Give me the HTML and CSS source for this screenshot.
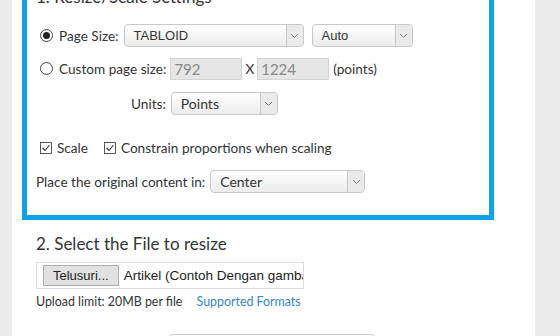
FILE: index.html
```html
<!DOCTYPE html>
<html lang="en">

<head>
    <meta charset="UTF-8">
    <meta name="viewport" content="width=device-width, initial-scale=1.0">
    <title>Resize PDF</title>
    <link rel="stylesheet" href="styles.css">
</head>

<body>
    <div class="page">
        <div class="settings">
            <h3>1. Resize/Scale Settings</h3>

            <div class="row row-size">
                <span class="radio checked"></span>
                <label class="lbl">Page Size:</label>
                <div class="select sel-size arial"><span class="val">TABLOID</span><span class="arrow"><svg width="9" height="6" viewBox="0 0 9 6"><path d="M1 1l3.5 3.5L8 1" fill="none" stroke="#777" stroke-width="1"/></svg></span></div>
                <div class="select sel-orient arial"><span class="val">Auto</span><span class="arrow"><svg width="9" height="6" viewBox="0 0 9 6"><path d="M1 1l3.5 3.5L8 1" fill="none" stroke="#777" stroke-width="1"/></svg></span></div>
            </div>

            <div class="row row-custom">
                <span class="radio"></span>
                <label class="lbl">Custom page size:</label>
                <input class="num" type="text" value="792" disabled>
                <span class="x">X</span>
                <input class="num" type="text" value="1224" disabled>
                <span class="unit">(points)</span>
            </div>

            <div class="row row-units">
                <label class="lbl">Units:</label>
                <div class="select sel-units"><span class="val">Points</span><span class="arrow"><svg width="9" height="6" viewBox="0 0 9 6"><path d="M1 1l3.5 3.5L8 1" fill="none" stroke="#777" stroke-width="1"/></svg></span></div>
            </div>

            <div class="row row-checks">
                <span class="check"><svg width="10" height="10" viewBox="0 0 10 10"><path d="M1.5 5l2.5 2.5L8.5 2" fill="none" stroke="#333" stroke-width="1.1"/></svg></span>
                <label class="lbl">Scale</label>
                <span class="check second"><svg width="10" height="10" viewBox="0 0 10 10"><path d="M1.5 5l2.5 2.5L8.5 2" fill="none" stroke="#333" stroke-width="1.1"/></svg></span>
                <label class="lbl">Constrain proportions when scaling</label>
            </div>

            <div class="row row-place">
                <label class="lbl">Place the original content in:</label>
                <div class="select sel-place"><span class="val">Center</span><span class="arrow"><svg width="9" height="6" viewBox="0 0 9 6"><path d="M1 1l3.5 3.5L8 1" fill="none" stroke="#777" stroke-width="1"/></svg></span></div>
            </div>
        </div>

        <div class="upload">
            <h3>2. Select the File to resize</h3>
            <div class="file">
                <span class="file-btn">Telusuri...</span>
                <span class="file-name">Artikel (Contoh Dengan gambar).pdf</span>
            </div>
            <p class="limit">Upload limit: 20MB per file <a href="#">Supported Formats</a></p>
            <div class="submit"></div>
        </div>
    </div>
</body>

</html>
```

FILE: styles.css
```css
* {
    box-sizing: border-box;
}
body {
    margin: 0;
    background: #ebebeb;
    font-family: Lato, "Open Sans", sans-serif;
    font-size: 13.6px;
    color: #333;
    overflow: hidden;
    height: 336px;
}
.page {
    margin-left: 12px;
    width: 523px;
    height: 400px;
    background: #fff;
    padding: 0 41px 0 10px;
}
h3 {
    margin: 0;
    font-weight: normal;
    font-size: 17px;
    line-height: 24px;
}
.settings {
    margin-top: -34px;
    border: 5px solid #0fa2e6;
    padding: 14px 9px 22px 9px;
}
.settings h3 {
    margin-bottom: 15px;
}
.row {
    display: flex;
    align-items: center;
    height: 23px;
}
.row-size {
    margin-bottom: 10px;
}
.row-custom {
    margin-bottom: 12px;
}
.row-units {
    margin-bottom: 21px;
    padding-left: 95px;
}
.row-checks {
    margin-bottom: 11px;
}
.radio {
    width: 13px;
    height: 13px;
    border: 1px solid #444;
    border-radius: 50%;
    margin: 0 6px 0 4px;
    display: flex;
    align-items: center;
    justify-content: center;
}
.radio.checked::after {
    content: "";
    width: 7px;
    height: 7px;
    border-radius: 50%;
    background: #222;
}
.check {
    width: 12px;
    height: 12px;
    border: 1px solid #555;
    margin: 0 5px 0 4px;
    display: flex;
    align-items: center;
    justify-content: center;
}
.check.second {
    margin-left: 16px;
}
.lbl {
    white-space: nowrap;
}
.select {
    display: flex;
    align-items: center;
    height: 23px;
    border: 1px solid #c8c8c8;
    border-radius: 4px;
    background: linear-gradient(#fff, #ececec);
    margin-left: 5px;
    padding-left: 9px;
    font-size: 14px;
}
.select.arial {
    font-family: "Liberation Sans", Arial, sans-serif;
    font-size: 13px;
}
.select .val {
    flex: 1;
}
.select .arrow {
    width: 17px;
    height: 100%;
    border-left: 1px solid #c8c8c8;
    background: #eaeaea;
    border-radius: 0 3px 3px 0;
    display: flex;
    align-items: center;
    justify-content: center;
}
.sel-size {
    width: 180px;
}
.sel-orient {
    width: 101px;
    margin-left: 8px;
}
.sel-units {
    width: 107px;
}
.sel-place {
    width: 155px;
}
.num {
    width: 72px;
    height: 22px;
    border: 1px solid #d4d4d4;
    background: #e6e6e6;
    color: #888;
    font-family: inherit;
    font-size: 15px;
    padding: 0 0 0 3px;
    margin: 0;
}
.row-custom .lbl {
    margin-right: 4px;
}
.x {
    margin: 0 3px 0 3px;
}
.unit {
    margin-left: 4px;
}
.upload h3 {
    margin-top: 12px;
    margin-bottom: 6px;
    padding-left: 14px;
}
.file {
    margin-left: 14px;
    width: 268px;
    height: 27px;
    border: 1px solid #dcdcdc;
    display: flex;
    align-items: center;
    overflow: hidden;
    white-space: nowrap;
    font-family: "Liberation Sans", Arial, sans-serif;
    font-size: 13.5px;
    color: #222;
}
.file-btn {
    margin-left: 6px;
    height: 21px;
    line-height: 19px;
    padding: 0 9px;
    border: 1px solid #adadad;
    background: #e1e1e1;
    font-size: 13px;
}
.file-name {
    margin-left: 5px;
}
.limit {
    margin: 5px 0 0 14px;
    font-size: 12.4px;
    line-height: 16px;
}
.limit a {
    color: #3685c6;
    text-decoration: none;
    margin-left: 11px;
}
.submit {
    margin: 24px 0 0 146px;
    width: 208px;
    height: 30px;
    border: 1px solid #ccc;
    border-radius: 5px;
}
```
